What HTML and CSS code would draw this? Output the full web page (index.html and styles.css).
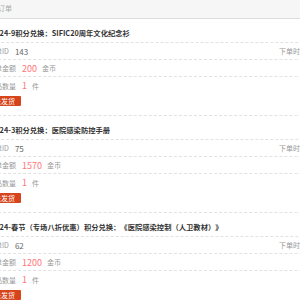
FILE: index.html
```html
<!DOCTYPE html>
<html lang="zh-CN">
<head>
    <meta charset="UTF-8">
    <meta name="viewport" content="width=device-width, initial-scale=1.0">
    <title>我的订单</title>
    <link rel="stylesheet" href="styles.css">
</head>
<body>
    <div class="page">
        <div class="tab-bar">我的订单</div>

        <div class="order">
            <div class="order-title">2024-9积分兑换：SIFIC20周年文化纪念衫</div>
            <div class="order-row">
                <div class="row-main"><span class="label">订单ID</span><span class="value">143</span></div>
                <span class="order-time">下单时间：2024-09-12 10:21</span>
            </div>
            <div class="order-row">
                <div class="row-main"><span class="label">订单金额</span><span class="price">200</span><span class="unit">金币</span></div>
            </div>
            <div class="order-row last">
                <div class="row-main"><span class="label">商品数量</span><span class="count">1</span><span class="unit">件</span></div>
            </div>
            <button class="status-btn">未发货</button>
        </div>

        <div class="order">
            <div class="order-title">2024-3积分兑换：医院感染防控手册</div>
            <div class="order-row">
                <div class="row-main"><span class="label">订单ID</span><span class="value">75</span></div>
                <span class="order-time">下单时间：2024-03-08 15:40</span>
            </div>
            <div class="order-row">
                <div class="row-main"><span class="label">订单金额</span><span class="price">1570</span><span class="unit">金币</span></div>
            </div>
            <div class="order-row last">
                <div class="row-main"><span class="label">商品数量</span><span class="count">1</span><span class="unit">件</span></div>
            </div>
            <button class="status-btn">未发货</button>
        </div>

        <div class="order">
            <div class="order-title">2024-春节（专场八折优惠）积分兑换：《医院感染控制（人卫教材）》</div>
            <div class="order-row">
                <div class="row-main"><span class="label">订单ID</span><span class="value">62</span></div>
                <span class="order-time">下单时间：2024-02-05 09:12</span>
            </div>
            <div class="order-row">
                <div class="row-main"><span class="label">订单金额</span><span class="price">1200</span><span class="unit">金币</span></div>
            </div>
            <div class="order-row last">
                <div class="row-main"><span class="label">商品数量</span><span class="count">1</span><span class="unit">件</span></div>
            </div>
            <button class="status-btn">未发货</button>
        </div>
    </div>
</body>
</html>
```

FILE: styles.css
```css
body {
    margin: 0;
    overflow: hidden;
    background-color: #fff;
    font-family: "Noto Sans CJK SC", "Liberation Sans", sans-serif;
    color: #333;
    text-spacing-trim: space-all;
}
.page {
    width: 420px;
    margin-left: -12px;
}
.tab-bar {
    height: 18px;
    line-height: 17px;
    margin-left: -4px;
    background-color: #f6f6f6;
    border-bottom: 1px solid #ddd;
    font-size: 7px;
    color: #aaa;
}
.order {
    padding-bottom: 9px;
    border-bottom: 1px dashed #e2e2e2;
}
.order-title {
    box-sizing: border-box;
    height: 24px;
    padding-top: 5px;
    line-height: 18px;
    font-size: 7.3px;
    font-weight: bold;
    color: #333;
    border-bottom: 1px dashed #e2e2e2;
    margin-left: 3px;
    white-space: nowrap;
}
.order-row {
    box-sizing: border-box;
    display: flex;
    align-items: center;
    height: 17px;
    border-bottom: 1px dashed #e2e2e2;
    font-size: 7px;
}
.order-row.last {
    border-bottom: none;
}
.row-main {
    flex: 0 0 291px;
    display: flex;
    align-items: center;
}
.label {
    color: #999;
    margin-right: 6px;
}
.value {
    color: #666;
    font-size: 8px;
}
.price, .count {
    color: #f77;
    font-size: 9px;
    margin-right: 5px;
}
.unit {
    color: #999;
}
.order-time {
    color: #999;
    font-size: 7px;
    white-space: nowrap;
}
.status-btn {
    display: block;
    margin: 2px 0 0 0;
    height: 10px;
    padding: 0 6px;
    border: none;
    border-radius: 1px;
    background-color: #d6441b;
    color: #fff;
    font-family: inherit;
    font-size: 7px;
    line-height: 10px;
}
```
